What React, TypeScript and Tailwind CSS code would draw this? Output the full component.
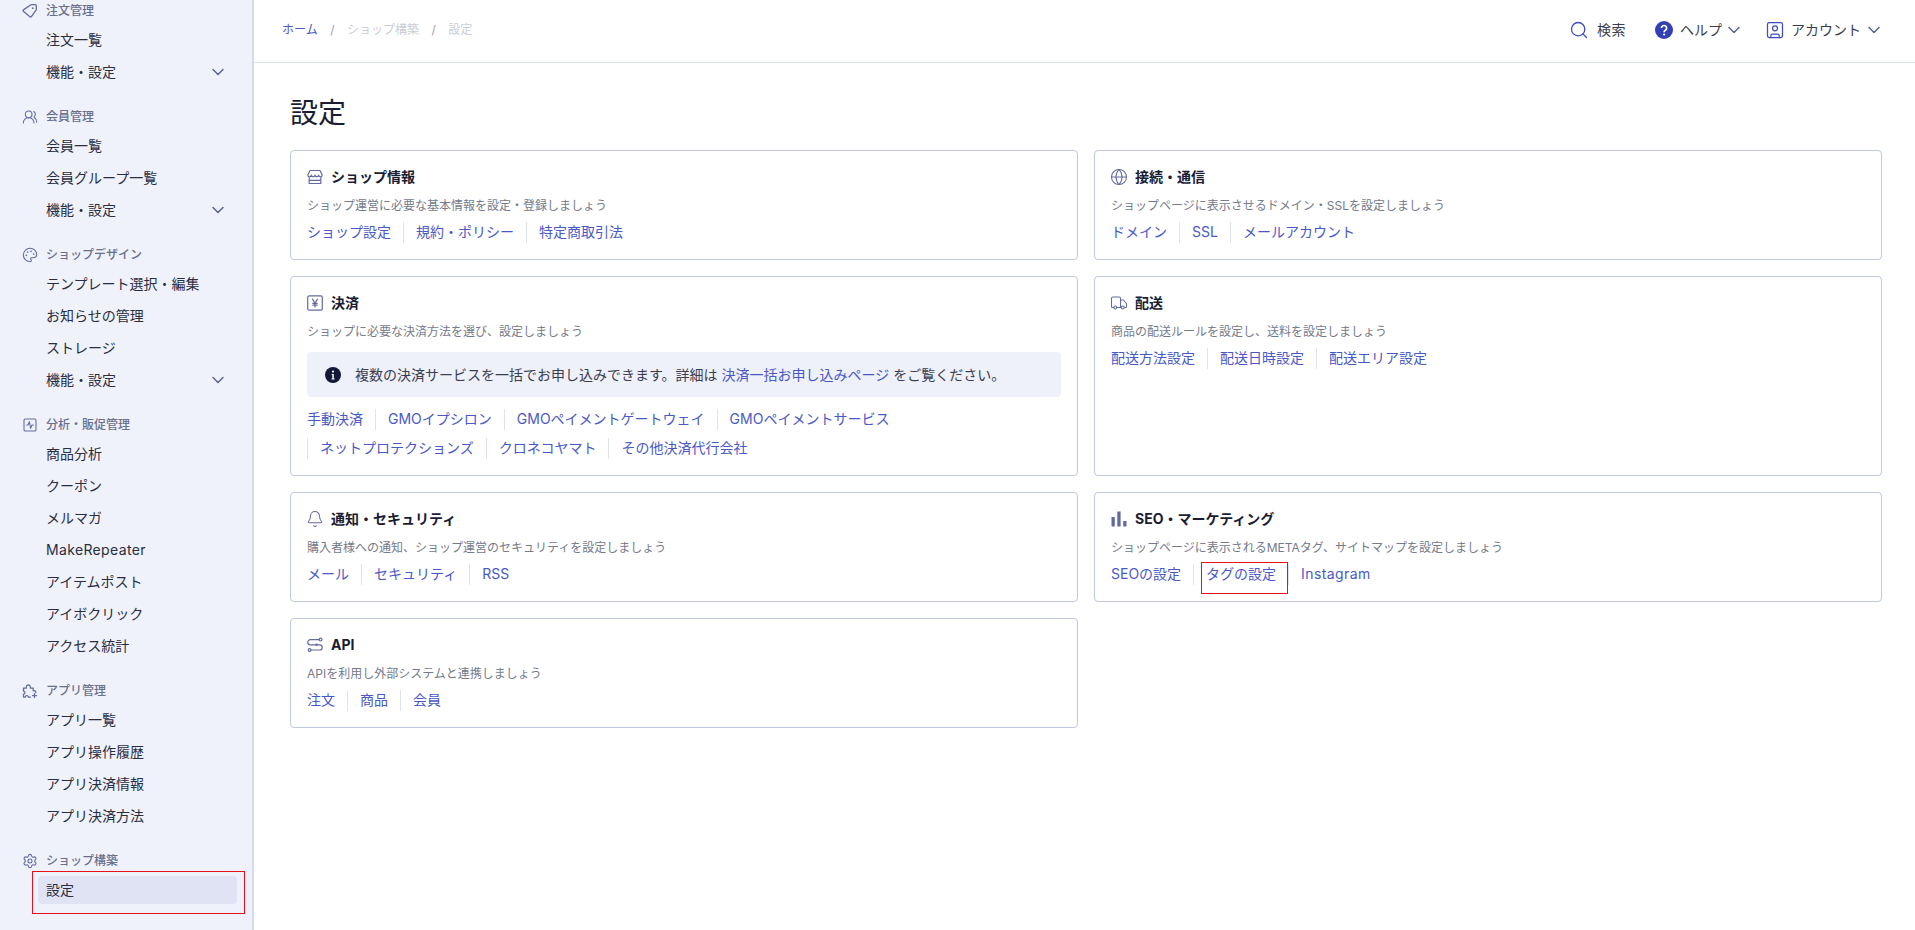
import type { ReactNode } from "react";
import {
  Bell,
  ChevronDown,
  Globe,
  Palette,
  Search,
  Settings,
  SquareActivity,
  SquareUser,
  Truck,
  UsersRound,
} from "lucide-react";

const sideIcon = "h-4 w-4 shrink-0 text-[#636b9e]";
const cardIcon = "h-4 w-4 shrink-0 text-[#636b9e]";
const cardLucide = "-mx-px h-[18px] w-[18px] shrink-0 text-[#636b9e]";

function TagIcon() {
  return (
    <svg viewBox="0 0 16 16" fill="none" stroke="currentColor" strokeWidth="1.3" strokeLinejoin="round" className={sideIcon}>
      <path d="M1.4 6.9 8.6 2c.3-.2.5-.3.8-.3h4c.5 0 .9.4.9.9v3.8c0 .3-.1.6-.3.8l-4.6 6.4c-.4.5-1.1.5-1.5.1L1.3 8.3c-.4-.4-.4-1 .1-1.4Z" />
      <circle cx="10.8" cy="5.2" r="0.9" fill="currentColor" stroke="none" />
    </svg>
  );
}

function PuzzlePlusIcon() {
  return (
    <svg viewBox="0 0 16 16" fill="none" stroke="currentColor" strokeWidth="1.25" strokeLinecap="round" strokeLinejoin="round" className={sideIcon}>
      <path d="M8.4 14H6.2c.2-2-3-2-2.8 0H1.5v-3c1.9.2 1.9-3 0-2.8V5.2h2.8c-.6-4.4 4.6-4.4 4 0h2.9v2.6c2-.5 3.2 1 2.6 2" />
      <path d="M12.5 10.6v4M10.5 12.6h4" />
    </svg>
  );
}

function StoreIcon() {
  return (
    <svg viewBox="0 0 16 16" fill="none" stroke="currentColor" strokeWidth="1.2" strokeLinejoin="round" className={cardIcon}>
      <path d="M3 1.5h10l2.2 4.6c0 2.3-3.6 2.3-3.6 0 0 2.3-3.6 2.3-3.6 0 0 2.3-3.6 2.3-3.6 0 0 2.3-3.6 2.3-3.6 0Z" />
      <path d="M2.2 8.3v6.2h11.6V8.3M2.2 11.3h11.6" />
    </svg>
  );
}

function YenIcon() {
  return (
    <svg viewBox="0 0 16 16" fill="none" stroke="currentColor" strokeWidth="1.2" strokeLinecap="round" strokeLinejoin="round" className={cardIcon}>
      <rect x="0.7" y="0.9" width="14.6" height="14.2" rx="1.6" />
      <path d="m5.5 4.2 2.5 3.8 2.5-3.8M8 8v3.9M5.8 8.4h4.4M5.8 10.1h4.4" />
    </svg>
  );
}

function BarsIcon() {
  return (
    <svg viewBox="0 0 16 16" fill="currentColor" className={cardIcon}>
      <rect x="0.5" y="6" width="3.3" height="9.5" />
      <rect x="6.3" y="0.5" width="3.3" height="15" />
      <rect x="12.2" y="10" width="3.3" height="5.5" />
    </svg>
  );
}

function RouteIcon() {
  return (
    <svg viewBox="0 0 16 16" fill="none" stroke="currentColor" strokeWidth="1.2" strokeLinecap="round" className={cardIcon}>
      <path d="M12 2.6H3.4a2.6 2.6 0 0 0 0 5.2h9.2a2.6 2.6 0 0 1 0 5.2H4" />
      <circle cx="13.6" cy="2.6" r="1.4" />
      <circle cx="2.6" cy="13" r="1.4" />
      <circle cx="9.6" cy="7.8" r="1.2" fill="currentColor" stroke="none" />
    </svg>
  );
}

function InfoIcon() {
  return (
    <svg viewBox="0 0 16 16" className="h-4 w-4 shrink-0">
      <circle cx="8" cy="8" r="8" fill="#14183a" />
      <circle cx="8" cy="4.6" r="1.1" fill="#fff" />
      <path d="M6.6 7h2.2v4.4h.8v1.1H6.5v-1.1h.8V8.1h-.7Z" fill="#fff" />
    </svg>
  );
}

function HelpIcon() {
  return (
    <svg viewBox="0 0 18 18" className="block h-[18px] w-[18px]">
      <circle cx="9" cy="9" r="9" fill="#3340b5" />
      <path d="M6.4 7.1a2.6 2.6 0 1 1 4 2.2c-.9.6-1.3 1-1.3 1.9" fill="none" stroke="#fff" strokeWidth="1.7" />
      <circle cx="9.1" cy="13.5" r="1.1" fill="#fff" />
    </svg>
  );
}

type SideItem = { label: string; more?: boolean; active?: boolean; wide?: boolean };
type SideGroup = { title: string; icon: ReactNode; items: SideItem[] };

const sideGroups: SideGroup[] = [
  {
    title: "注文管理",
    icon: <TagIcon />,
    items: [{ label: "注文一覧" }, { label: "機能・設定", more: true }],
  },
  {
    title: "会員管理",
    icon: <UsersRound className={sideIcon} strokeWidth={1.6} />,
    items: [{ label: "会員一覧" }, { label: "会員グループ一覧" }, { label: "機能・設定", more: true }],
  },
  {
    title: "ショップデザイン",
    icon: <Palette className={sideIcon} strokeWidth={1.6} />,
    items: [
      { label: "テンプレート選択・編集" },
      { label: "お知らせの管理" },
      { label: "ストレージ" },
      { label: "機能・設定", more: true },
    ],
  },
  {
    title: "分析・販促管理",
    icon: <SquareActivity className={sideIcon} strokeWidth={1.6} />,
    items: [
      { label: "商品分析" },
      { label: "クーポン" },
      { label: "メルマガ" },
      { label: "MakeRepeater", wide: true },
      { label: "アイテムポスト" },
      { label: "アイボクリック" },
      { label: "アクセス統計" },
    ],
  },
  {
    title: "アプリ管理",
    icon: <PuzzlePlusIcon />,
    items: [
      { label: "アプリ一覧" },
      { label: "アプリ操作履歴" },
      { label: "アプリ決済情報" },
      { label: "アプリ決済方法" },
    ],
  },
  {
    title: "ショップ構築",
    icon: <Settings className={sideIcon} strokeWidth={1.6} />,
    items: [{ label: "設定", active: true }],
  },
];

function Sidebar() {
  return (
    <aside className="h-full w-[254px] shrink-0 overflow-hidden border-r-2 border-[#d5d9ea] bg-[#eff2fb]">
      {sideGroups.map((group) => (
        <div key={group.title} className="mb-[18px]">
          <div className="mb-1 flex h-5 items-center gap-2 pl-[22px] pt-0.5 text-xs font-medium text-[#6a6f8c]">
            {group.icon}
            <span>{group.title}</span>
          </div>
          {group.items.map((item) => (
            <div key={item.label} className="relative ml-[38px] mr-[15px] h-8 py-0.5">
              <div
                className={`flex h-7 items-center justify-between rounded pl-2 pr-[9px] text-sm text-[#2a2d3f] ${
                  item.active ? "bg-[#e0e3f4]" : ""
                }`}
              >
                <span className={item.wide ? "tracking-[0.35px]" : ""}>{item.label}</span>
                {item.more && <ChevronDown className="h-5 w-5 text-[#5a6290]" strokeWidth={1.75} />}
              </div>
              {item.active && (
                <div className="absolute -bottom-2 -left-1.5 -right-2 -top-[3px] border border-[#e8101a]" />
              )}
            </div>
          ))}
        </div>
      ))}
    </aside>
  );
}

function Header() {
  return (
    <header className="flex h-[63px] items-center justify-between border-b border-[#e0e6ee] pb-0.5 pl-[28px] pr-[31px]">
      <nav className="flex items-center gap-[12.5px] text-xs">
        <a className="text-[#4a58c7]">ホーム</a>
        <span className="text-[#9a9eab]">/</span>
        <span className="text-[#c9cdd8]">ショップ構築</span>
        <span className="text-[#9a9eab]">/</span>
        <span className="text-[#c9cdd8]">設定</span>
      </nav>
      <div className="flex items-center text-sm text-[#3a3d50]">
        <Search className="h-5 w-5 text-[#3f4cc0]" strokeWidth={1.6} />
        <span className="ml-2 tracking-[0.5px]">検索</span>
        <span className="ml-[29px]">
          <HelpIcon />
        </span>
        <span className="ml-[7px]">ヘルプ</span>
        <ChevronDown className="ml-0.5 h-5 w-5 text-[#5a6290]" strokeWidth={1.75} />
        <SquareUser className="ml-[21px] h-5 w-5 text-[#3f4cc0]" strokeWidth={1.5} />
        <span className="ml-1.5">アカウント</span>
        <ChevronDown className="ml-[3px] h-5 w-5 text-[#5a6290]" strokeWidth={1.75} />
      </div>
    </header>
  );
}

type LinkRow = { label: string; marked?: boolean; wide?: boolean };

function LinkList({ links, className = "" }: { links: LinkRow[]; className?: string }) {
  return (
    <div className={`flex flex-wrap gap-y-2 text-sm leading-[19px] text-[#4a58c7] ${className}`}>
      {links.map((link, i) => (
        <a
          key={link.label}
          className={`relative mr-3 h-[21px] ${i === 0 ? "" : "border-l border-[#dfe3ec] pl-3"} ${
            link.wide ? "tracking-[0.4px]" : ""
          }`}
        >
          {link.label}
          {link.marked && (
            <span className="absolute -bottom-[9px] -right-3 -top-0.5 left-[7px] border border-[#e8101a]" />
          )}
        </a>
      ))}
    </div>
  );
}

function SettingCard({
  title,
  icon,
  desc,
  links,
  notice,
}: {
  title: string;
  icon: ReactNode;
  desc: string;
  links: LinkRow[];
  notice?: boolean;
}) {
  return (
    <section className="rounded border border-[#bfc8de] pb-4 pl-4 pr-4 pt-4">
      <h2 className="flex h-5 items-center gap-2 text-sm font-bold text-[#1a1c33]">
        {icon}
        {title}
      </h2>
      <p className="mt-[11px] h-4 text-xs leading-4 text-[#757a8a]">{desc}</p>
      {notice && (
        <div className="mt-3 flex h-[45px] items-center gap-3.5 rounded bg-[#eef0fa] pl-[18px] text-sm text-[#3a3d50]">
          <InfoIcon />
          <span>
            複数の決済サービスを一括でお申し込みできます。詳細は{" "}
            <a className="text-[#4a58c7]">決済一括お申し込みページ</a> をご覧ください。
          </span>
        </div>
      )}
      <LinkList links={links} className={notice ? "mt-3" : "mt-2"} />
    </section>
  );
}

const l = (...labels: string[]): LinkRow[] => labels.map((label) => ({ label }));

export default function App() {
  return (
    <div className="flex h-[930px] w-[1915px] overflow-hidden bg-white font-['Inter','Noto_Sans_CJK_JP',sans-serif]">
      <Sidebar />
      <main className="min-w-0 flex-1">
        <Header />
        <div className="pl-9 pr-[33px]">
          <h1 className="flex h-[87px] items-center pt-[13px] text-[28px] font-normal text-[#1a1c33]">設定</h1>
          <div className="grid grid-cols-2 gap-4">
            <SettingCard
              title="ショップ情報"
              icon={<StoreIcon />}
              desc="ショップ運営に必要な基本情報を設定・登録しましょう"
              links={l("ショップ設定", "規約・ポリシー", "特定商取引法")}
            />
            <SettingCard
              title="接続・通信"
              icon={<Globe className={cardLucide} strokeWidth={1.4} />}
              desc="ショップページに表示させるドメイン・SSLを設定しましょう"
              links={l("ドメイン", "SSL", "メールアカウント")}
            />
            <SettingCard
              title="決済"
              icon={<YenIcon />}
              desc="ショップに必要な決済方法を選び、設定しましょう"
              notice
              links={l(
                "手動決済",
                "GMOイプシロン",
                "GMOペイメントゲートウェイ",
                "GMOペイメントサービス",
                "ネットプロテクションズ",
                "クロネコヤマト",
                "その他決済代行会社",
              )}
            />
            <SettingCard
              title="配送"
              icon={<Truck className={cardLucide} strokeWidth={1.4} />}
              desc="商品の配送ルールを設定し、送料を設定しましょう"
              links={l("配送方法設定", "配送日時設定", "配送エリア設定")}
            />
            <SettingCard
              title="通知・セキュリティ"
              icon={<Bell className={cardLucide} strokeWidth={1.4} />}
              desc="購入者様への通知、ショップ運営のセキュリティを設定しましょう"
              links={l("メール", "セキュリティ", "RSS")}
            />
            <SettingCard
              title="SEO・マーケティング"
              icon={<BarsIcon />}
              desc="ショップページに表示されるMETAタグ、サイトマップを設定しましょう"
              links={[
                { label: "SEOの設定" },
                { label: "タグの設定", marked: true },
                { label: "Instagram", wide: true },
              ]}
            />
            <SettingCard
              title="API"
              icon={<RouteIcon />}
              desc="APIを利用し外部システムと連携しましょう"
              links={l("注文", "商品", "会員")}
            />
          </div>
        </div>
      </main>
    </div>
  );
}
